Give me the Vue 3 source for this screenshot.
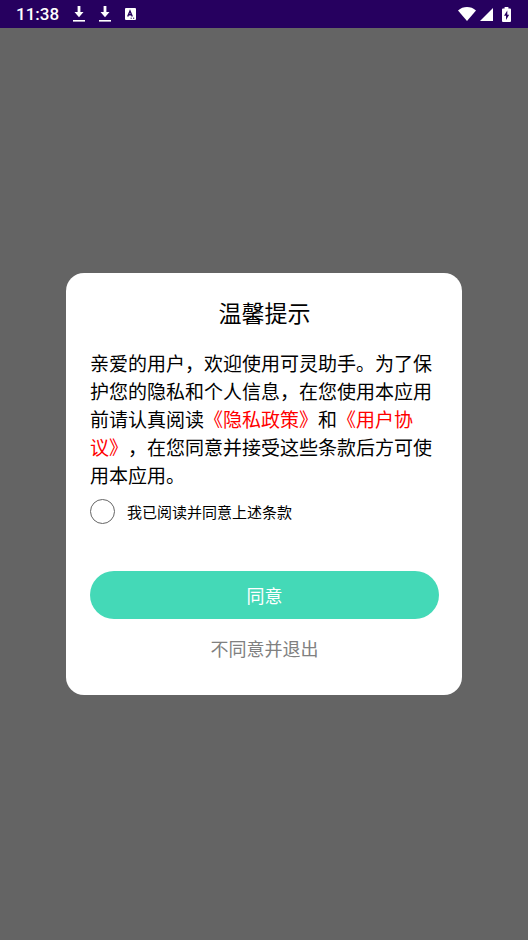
<script setup>
import { ref } from 'vue'

const agreed = ref(false)
</script>

<template>
  <div class="screen">
    <header class="status">
      <div class="group">
        <time class="clock">11:38</time>
        <svg v-for="n in 2" :key="n" class="download" width="12" height="16" viewBox="0 0 12 16" fill="#fff" aria-hidden="true">
          <path d="M4.600 0h2.800v6h3.100L6 11.200 1.500 6h3.100z" />
          <rect y="14" width="12" height="1.600" />
        </svg>
        <svg width="11" height="12" viewBox="0 0 11 12" aria-hidden="true">
          <rect width="11" height="12" rx="1" fill="#fff" />
          <path d="M2.700 8.600 5 3l2.300 5.600M3.500 6.800h3" fill="none" stroke="#26005f" stroke-width="1.400" />
          <path d="M5.600 10.200h1.200M8 10.200h1.200" stroke="#26005f" stroke-width="1" />
        </svg>
      </div>
      <div class="group">
        <svg width="18" height="14" viewBox="0 0 18 14" fill="#fff" aria-hidden="true">
          <path d="M0 3.400C5.200-1.100 12.800-1.100 18 3.400L9 14z" />
        </svg>
        <svg class="signal" width="13" height="13" viewBox="0 0 13 13" fill="#fff" aria-hidden="true">
          <path d="M13 0v13H0z" />
        </svg>
        <svg width="9" height="15" viewBox="0 0 9 15" aria-hidden="true">
          <path d="M2.600 0h3.800v1.500H8a1 1 0 0 1 1 1V14a1 1 0 0 1-1 1H1a1 1 0 0 1-1-1V2.500a1 1 0 0 1 1-1h1.600z" fill="#fff" />
          <path d="M5.300 3.600 2 8.700h2v4.200l3.200-5.100H5.300z" fill="#26005f" />
        </svg>
      </div>
    </header>

    <main class="scrim">
      <section class="dialog" role="dialog" aria-labelledby="dialog-title">
        <h1 id="dialog-title" class="title">温馨提示</h1>
        <p class="message">亲爱的用户，欢迎使用可灵助手。为了保护您的隐私和个人信息，在您使用本应用前请认真阅读<a href="#privacy">《隐私政策》</a>和<a href="#terms">《用户协议》</a>，在您同意并接受这些条款后方可使用本应用。</p>
        <label class="consent" for="consent">
          <input id="consent" v-model="agreed" type="checkbox" />
          <span>我已阅读并同意上述条款</span>
        </label>
        <button class="accept" type="button">同意</button>
        <button class="decline" type="button">不同意并退出</button>
      </section>
    </main>
  </div>
</template>

<style>
body {
  margin: 0;
  background: #646464;
}
</style>

<style scoped>
.screen {
  display: flex;
  flex-direction: column;
  min-height: 100vh;
  background: #646464;
  font-family: "Noto Sans CJK SC", sans-serif;
  font-weight: 400;
  color: #000;
}

.status {
  display: flex;
  align-items: center;
  justify-content: space-between;
  box-sizing: border-box;
  height: 28px;
  padding: 0 17px 0 16px;
  background: #26005f;
}

.group {
  display: flex;
  align-items: center;
}

.clock {
  margin-right: 14px;
  font: 500 17px/30px Roboto, sans-serif;
  color: #fff;
}

.download {
  margin-right: 14px;
}

.signal {
  margin: 0 9px 0 4px;
}

.scrim {
  display: flex;
  flex: 1;
  align-items: center;
  justify-content: center;
}

.dialog {
  display: flex;
  flex-direction: column;
  box-sizing: border-box;
  width: 75%;
  padding: 24px 23px 29px 24px;
  border-radius: 18px;
  background: #fff;
}

.title {
  margin: 0;
  font-size: 23px;
  font-weight: inherit;
  line-height: 30px;
  text-align: center;
}

.message {
  margin: 22px 0 0;
  font-size: 19px;
  line-height: 28px;
  text-spacing-trim: space-all;
}

.message a {
  color: #f00;
  text-decoration: none;
}

.consent {
  display: flex;
  align-items: center;
  gap: 12px;
  margin-top: 10px;
  font-size: 15px;
  line-height: 25px;
}

.consent input {
  appearance: none;
  width: 25px;
  height: 25px;
  margin: 0;
  border: 1px solid #666;
  border-radius: 50%;
}

.consent input:checked {
  background: #44d9b7;
}

.accept,
.decline {
  padding: 0;
  border: 0;
  font-family: inherit;
  font-size: 18px;
  font-weight: inherit;
  cursor: pointer;
}

.accept {
  height: 48px;
  margin-top: 47px;
  border-radius: 24px;
  background: #44d9b7;
  color: #fff;
}

.decline {
  align-self: center;
  margin-top: 11px;
  background: none;
  line-height: 36px;
  color: #808080;
}
</style>
